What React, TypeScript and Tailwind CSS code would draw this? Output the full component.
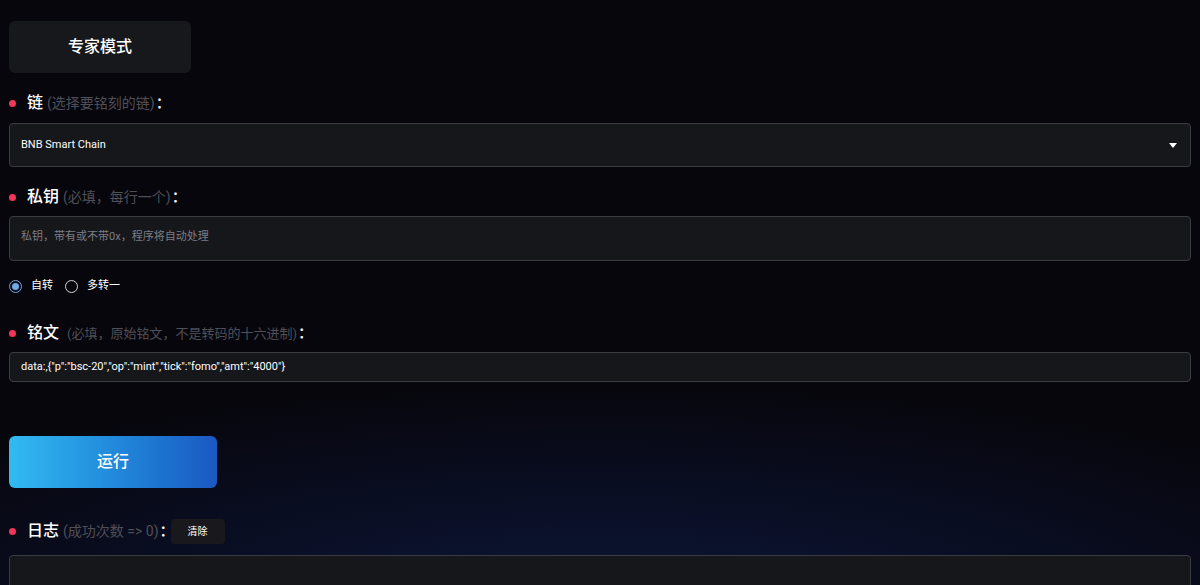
import { ReactNode } from 'react'

const font = { fontFamily: 'Roboto, "Noto Sans CJK SC", sans-serif' }

function Label({ title, hint, small, children }: { title: string; hint: string; small?: boolean; children?: ReactNode }) {
    return (
        <div className="flex items-center h-[26px] pl-[9px]">
            <span className="w-[7px] h-[7px] rounded-full bg-[#f0365a] mr-[11px]" />
            <span className="text-[16px] font-medium text-white leading-none">{title}</span>
            {small ? (
                <span className="text-[13px] text-[#4f4f58] ml-[8px] leading-none">{hint}</span>
            ) : (
                <span className="text-[14px] text-[#4f4f58] ml-[4px] leading-none">{hint}</span>
            )}
            <span className="text-[15px] text-white ml-[1px] font-medium leading-none">：</span>
            {children}
        </div>
    )
}

export default function App() {
    return (
        <div
            style={font}
            className="min-h-[585px] h-[585px] overflow-hidden bg-[#07060c] bg-[radial-gradient(ellipse_75%_40%_at_50%_105%,#0d1838_0%,#0a0f26_45%,transparent_100%)] text-white px-[9px]"
        >
            <div className="pt-[21px]">
                <button className="w-[182px] h-[52px] rounded-[6px] bg-[#17181c] text-[16px] font-medium text-white">
                    专家模式
                </button>
            </div>

            <div className="mt-[17px] -ml-[9px]">
                <Label title="链" hint="(选择要铭刻的链)" />
            </div>
            <div className="mt-[7px] h-[44px] rounded-[4px] border border-[#3b3c42] bg-[#16171b] flex items-center justify-between px-[11px]">
                <span className="text-[11px] text-white">BNB Smart Chain</span>
                <svg width="8" height="5" viewBox="0 0 8 5" className="mr-[2px]">
                    <path d="M0 0h8L4 5z" fill="#fff" />
                </svg>
            </div>

            <div className="mt-[17px] -ml-[9px]">
                <Label title="私钥" hint="(必填，每行一个)" />
            </div>
            <div className="mt-[6px] h-[45px] rounded-[4px] border border-[#3b3c42] bg-[#16171b] px-[11px] pt-[6px]">
                <span className="text-[11px] text-[#7c7d84]">私钥，带有或不带0x，程序将自动处理</span>
            </div>

            <div className="mt-[18px] flex items-center h-[14px] text-[11px] text-white">
                <span className="w-[13px] h-[13px] rounded-full border-[1.5px] border-[#6ea8e6] flex items-center justify-center">
                    <span className="w-[7px] h-[7px] rounded-full bg-[#6ea8e6]" />
                </span>
                <span className="ml-[9px]">自转</span>
                <span className="ml-[12px] w-[13px] h-[13px] rounded-full border-[1.5px] border-[#d6d6d6]" />
                <span className="ml-[9px]">多转一</span>
            </div>

            <div className="mt-[27px] -ml-[9px]">
                <Label title="铭文" hint="(必填，原始铭文，不是转码的十六进制)" small />
            </div>
            <div className="mt-[6px] h-[30px] rounded-[4px] border border-[#3b3c42] bg-[#16171b] flex items-center px-[11px]">
                <span className="text-[11px] text-white">data:,{'{"p":"bsc-20","op":"mint","tick":"fomo","amt":"4000"}'}</span>
            </div>

            <div className="mt-[54px]">
                <button className="w-[208px] h-[52px] rounded-[6px] bg-gradient-to-r from-[#33baf2] to-[#1b58c2] text-[16px] font-medium text-white">
                    运行
                </button>
            </div>

            <div className="mt-[30px] -ml-[9px]">
                <Label title="日志" hint="(成功次数 => 0)">
                    <button className="ml-[-4px] w-[54px] h-[25px] rounded-[4px] bg-[#19191d] text-[10px] text-white">清除</button>
                </Label>
            </div>
            <div className="mt-[11px] h-[60px] rounded-[4px] border border-[#3b3c42] bg-[#16171b]" />
        </div>
    )
}
